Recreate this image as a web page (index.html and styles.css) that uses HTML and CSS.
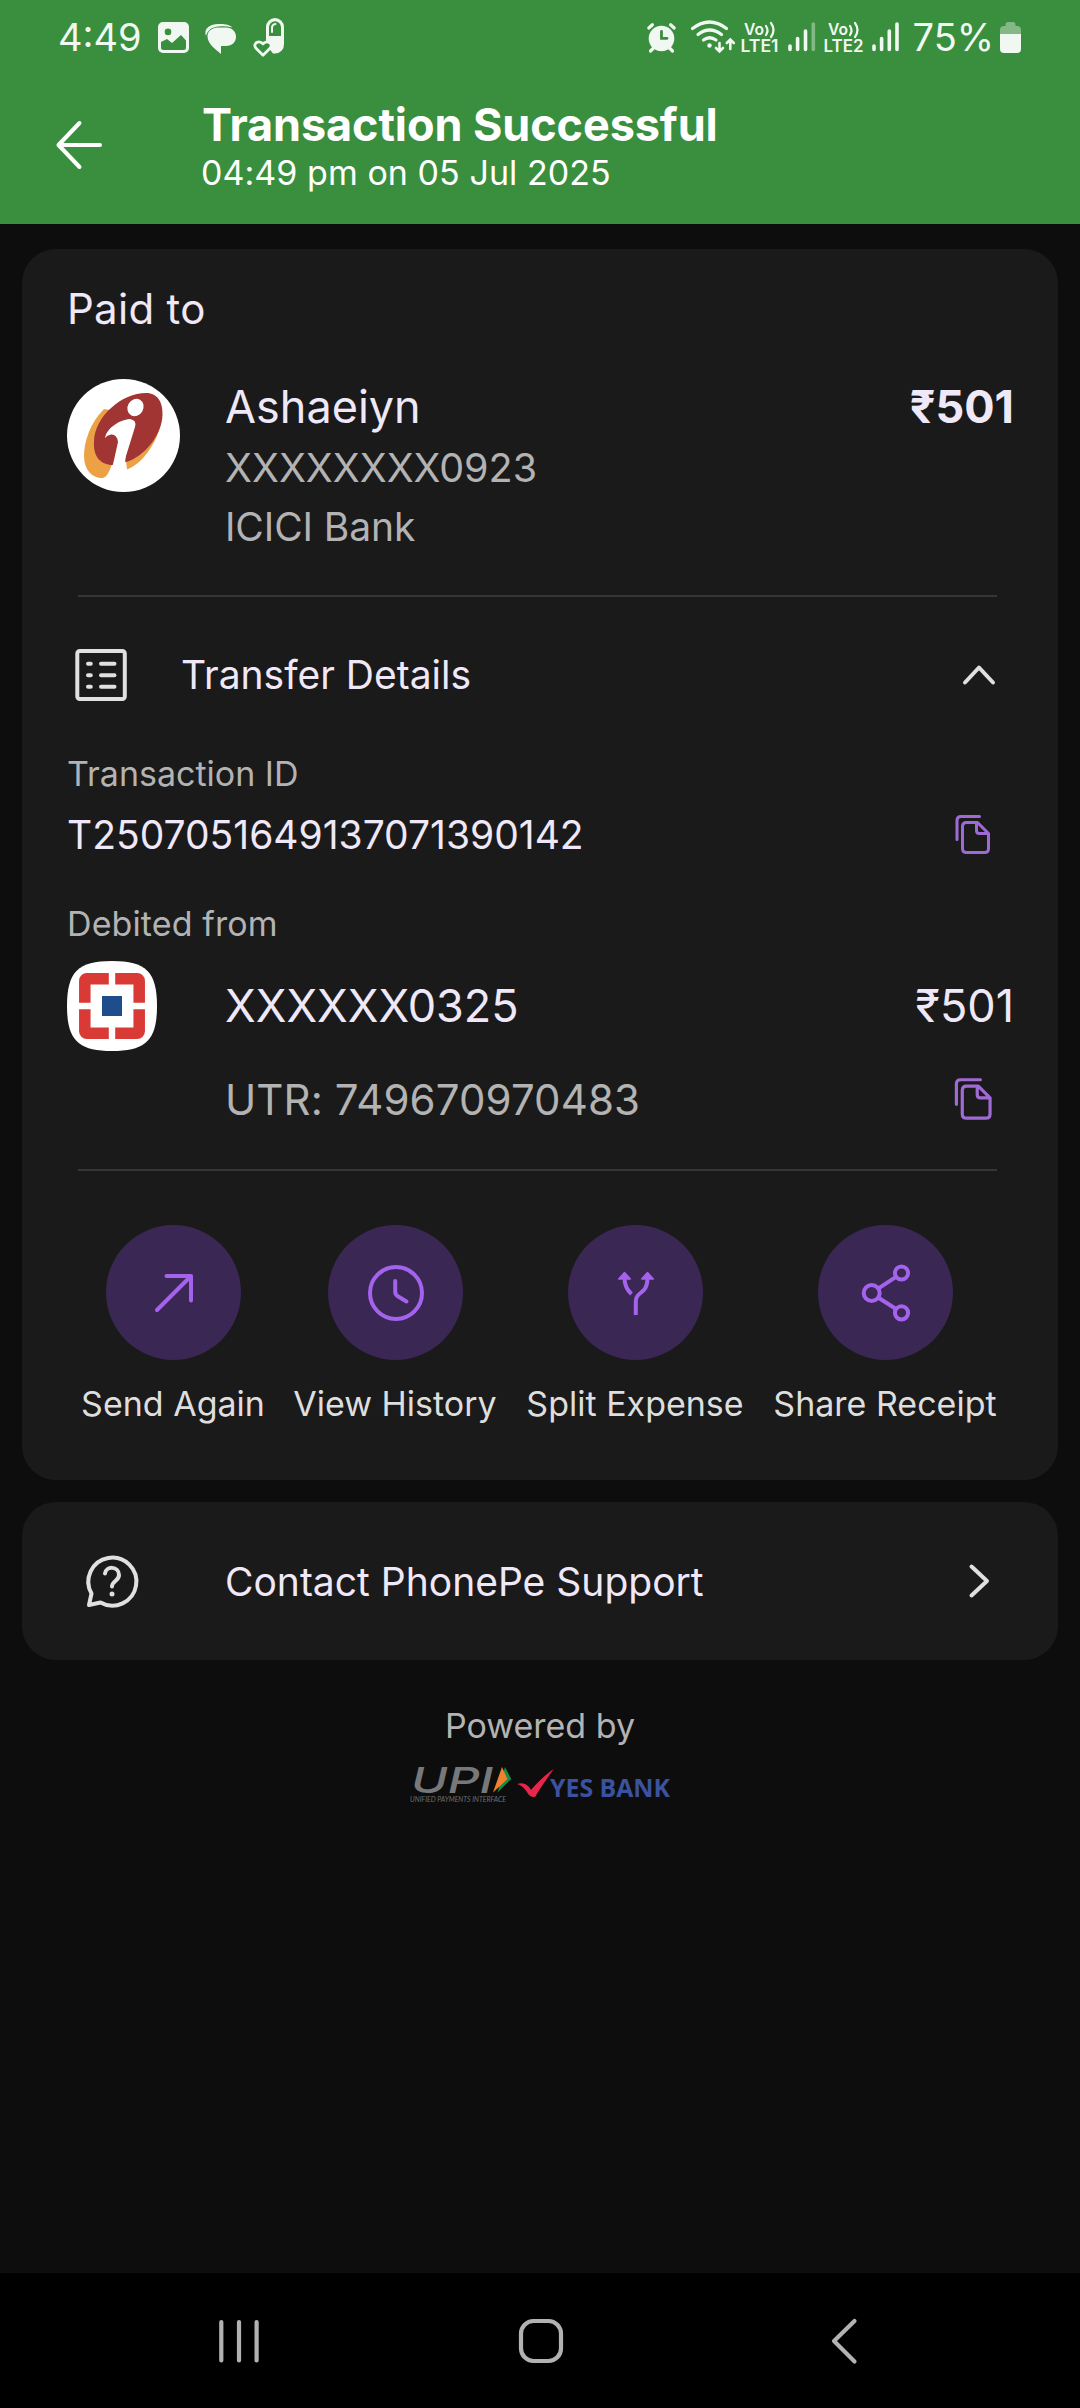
FILE: index.html
```html
<!DOCTYPE html>
<html lang="en">
<head>
<meta charset="utf-8">
<title>Transaction Successful</title>
<link rel="stylesheet" href="styles.css">
</head>
<body>
<div class="screen">
  <header class="header">
    <div class="status">
      <div class="status-side">
        <span class="status-text clock">4:49</span>
        <svg width="31" height="40" viewBox="158 17 31 40">
          <path fill="#f0f8f1" fill-rule="evenodd" d="M163 22h21a5 5 0 0 1 5 5v21a5 5 0 0 1-5 5h-21a5 5 0 0 1-5-5V27a5 5 0 0 1 5-5Zm5 6.600a3.300 3.300 0 1 0 0 6.600a3.300 3.300 0 0 0 0-6.600ZM161 42v5.500a2.500 2.500 0 0 0 2.500 2.500h20a2.500 2.500 0 0 0 2.500-2.500V40.500l-5-5.500l-9 8l-5-4Z"/>
        </svg>
        <svg width="32" height="40" viewBox="205 17 32 40">
          <path fill="#f0f8f1" d="M206 36c-3-8 5-12 12-12c6 0 10 0 14.500 3.500c-9-2-19-1.500-23 2.500c-2 2-3 4-3.500 6Z"/>
          <path fill="#f0f8f1" d="M218 27.500h8c6 0 10 4 10 9.200c0 5.300-4 9.300-10 9.300h-5V54c-5-4.500-13.500-10-13.500-17.500c0-5.500 4.500-9 10.500-9Z"/>
        </svg>
        <svg width="32" height="40" viewBox="252 17 32 40">
          <path fill="#f0f8f1" fill-rule="evenodd" d="M274 18a9 9 0 0 1 9 9v17a9 9 0 0 1-9 9.500h-2l-7-9V27a9 9 0 0 1 9-9Zm0 3.200a6 6 0 0 0-6 6V36h12v-8.800a6 6 0 0 0-6-6Z"/>
          <path fill="none" stroke="#f0f8f1" stroke-width="2" stroke-linecap="round" d="M271 32v-4q0-3.500 3.500-4"/>
          <path fill="#388e3c" stroke="#f0f8f1" stroke-width="2.800" stroke-linejoin="round" d="M262 55.300l-7-7c-4-5 3.500-8.800 7-4.300c3.500-4.500 11-.7 7 4.300Z"/>
        </svg>
      </div>
      <div class="status-side">
        <svg width="348" height="40" viewBox="646 17 348 40" class="signals">
          <g fill="none" stroke="#f0f8f1" stroke-width="3.200" stroke-linecap="round">
            <path d="M648.800 28l3.600-3.200M674.200 28l-3.600-3.200M650.500 51l4-4M672.500 51l-4-4"/>
            <circle cx="661.500" cy="38.500" r="12.800" fill="#f0f8f1" stroke="none"/>
            <path stroke="#388e3c" stroke-width="2.800" d="M661.500 31.500v6.800h5.500"/>
            <path stroke-width="3.200" d="M692.500 28.500q17-13 34 0M698 34.500q11.500-9 23.500 0M703.500 40q6-4.500 12.500 0"/>
            <path stroke-width="2.600" d="M719.500 43v8M716 48l3.500 3.500l3.500-3.500M730.300 49v-8.500M726.800 43l3.500-3.500l3.500 3.500"/>
          </g>
          <circle cx="709.500" cy="45.500" r="2.200" fill="#f0f8f1"/>
          <g fill="#f0f8f1" font-family="Inter, sans-serif" font-weight="600">
            <text x="744" y="35" font-size="16" textLength="20" lengthAdjust="spacingAndGlyphs">Vo</text>
            <text x="740.500" y="52" font-size="17" textLength="38" lengthAdjust="spacingAndGlyphs">LTE1</text>
            <text x="828" y="35" font-size="16" textLength="20" lengthAdjust="spacingAndGlyphs">Vo</text>
            <text x="823.500" y="52" font-size="17" textLength="40" lengthAdjust="spacingAndGlyphs">LTE2</text>
          </g>
          <path fill="none" stroke="#f0f8f1" stroke-width="2.200" stroke-linecap="round" d="M766 26q3 4.500 0 9M771 23q5 7 0 14M850 26q3 4.500 0 9M855 23q5 7 0 14"/>
          <g fill="none" stroke="#f0f8f1" stroke-width="3.600" stroke-linecap="round">
            <path d="M790 46v3.500M797.600 38.500v11M805.500 31v18.500M874 46v3.500M881.600 38.500v11M889.300 31v18.500M897 24v25.500"/>
            <path stroke-opacity=".4" d="M813.300 24v25.500"/>
          </g>
          <text x="912.500" y="51" font-size="38" font-family="Inter, sans-serif" fill="#f0f8f1">75%</text>
        </svg>
        <svg width="21" height="40" viewBox="1000 17 21 40">
          <path fill="#f0f8f1" fill-opacity=".4" d="M1000 34v-4q0-4 4-4h1.500v-1.500q0-2.500 2.500-2.500h5q2.500 0 2.500 2.500V26h1.500q4 0 4 4v4Z"/>
          <path fill="#f0f8f1" d="M1000 34h21v15q0 4-4 4h-13q-4 0-4-4Z"/>
        </svg>
      </div>
    </div>
    <div class="titlebar">
      <svg class="back" width="50" height="52" viewBox="54 119 50 52">
        <path fill="none" stroke="#fff" stroke-width="4" stroke-linecap="round" stroke-linejoin="round" d="M79.500 123L58.500 145l21 22M58.500 145H100"/>
      </svg>
      <div>
        <h1 class="title">Transaction Successful</h1>
        <p class="subtitle">04:49 pm on 05 Jul 2025</p>
      </div>
    </div>
  </header>

  <main class="content">
    <section class="card receipt">
      <h2 class="paid-to">Paid to</h2>
      <div class="payee">
        <svg width="113" height="113" viewBox="67 379 113 113">
          <circle cx="123.500" cy="435.500" r="56.500" fill="#fff"/>
          <path fill="#eda145" d="M104 409C90 423 84 442 84 456C84 470 92 478 102 478C107 478 110 470 112 464L126 461L127 469.500C142 464 158 443 162.300 418Z"/>
          <path fill="#a03533" d="M146 393C158 393 163 403 162.500 415C161.500 436 144 457 126 462L113 465C100 465 93 456 94 441C95 416 122 393 146 393Z"/>
          <ellipse cx="135.500" cy="407.500" rx="7.800" ry="9" transform="rotate(30 135.500 407.500)" fill="#fff"/>
          <path fill="#fff" d="M105 438C107 428 119 420 130 419Q137 420 135 427L126 456Q124 464 127 470L120 480H106Q112 470 114 460L118 442Q117 434 111 434.500Q107 435 105 438Z"/>
        </svg>
        <div class="payee-info">
          <div class="payee-name">Ashaeiyn</div>
          <div class="payee-account">XXXXXXXX0923</div>
          <div class="payee-bank">ICICI Bank</div>
        </div>
        <div class="amount bold">₹501</div>
      </div>
      <div class="divider"></div>

      <div class="details-head">
        <svg width="52" height="54" viewBox="75 647 52 54">
          <g fill="none" stroke="#e0dfe1" stroke-width="4" stroke-linecap="round">
            <rect x="77.300" y="650" width="47.500" height="48" rx="2.500"/>
            <path d="M88 662.700h2.800M101 662.700h13.500M88 674.300h2.800M101 674.300h13.500M88 685.700h2.800M101 685.700h13.500"/>
          </g>
        </svg>
        <span class="details-title">Transfer Details</span>
        <svg width="36" height="24" viewBox="961 662 36 24">
          <path fill="none" stroke="#e0dfe1" stroke-width="4" stroke-linecap="round" stroke-linejoin="round" d="M965 681.500l14-15l14 15"/>
        </svg>
      </div>

      <div class="label txn-label">Transaction ID</div>
      <div class="txn-row">
        <span class="txn-id">T2507051649137071390142</span>
        <svg class="copy-small" width="40" height="44" viewBox="953 813 40 44">
          <g fill="none" stroke="#a06ad6" stroke-width="3" stroke-linejoin="round">
            <path stroke-linecap="round" d="M979.500 816.500H961q-4 0-4 4V839.500"/>
            <path d="M977.500 822.500H966.500q-4 0-4 4V848.500q0 4 4 4H984.500q4 0 4-4V833.500ZM976.500 822.500V830.500q0 3 3 3H988.500"/>
          </g>
        </svg>
      </div>

      <div class="label debit-label">Debited from</div>
      <div class="debit-row">
        <svg width="90" height="90" viewBox="67 961 90 90">
          <path fill="#fff" d="M112 961C146 961 157 972 157 1006S146 1051 112 1051S67 1040 67 1006S78 961 112 961Z"/>
          <rect x="84.800" y="978.800" width="54.400" height="54.400" rx="2" fill="none" stroke="#d93a35" stroke-width="11.500" stroke-linejoin="round"/>
          <path stroke="#fff" stroke-width="6.400" d="M112 970v20M112 1022v20M76 1006h20M128 1006h20"/>
          <rect x="102" y="996" width="20" height="20" fill="#1e4d8b"/>
        </svg>
        <span class="debit-account">XXXXXX0325</span>
        <span class="amount">₹501</span>
      </div>
      <div class="utr-row">
        <span class="utr">UTR: 749670970483</span>
        <svg class="copy-large" width="43" height="47" viewBox="953 813 40 44">
          <g fill="none" stroke="#a06ad6" stroke-width="3" stroke-linejoin="round">
            <path stroke-linecap="round" d="M979.500 816.500H961q-4 0-4 4V839.500"/>
            <path d="M977.500 822.500H966.500q-4 0-4 4V848.500q0 4 4 4H984.500q4 0 4-4V833.500ZM976.500 822.500V830.500q0 3 3 3H988.500"/>
          </g>
        </svg>
      </div>
      <div class="divider"></div>

      <nav class="actions">
        <div class="action">
          <div class="action-icon">
            <svg width="135" height="135" viewBox="106 1225 135 135" fill="none" stroke="#a463ec" stroke-width="4" stroke-linecap="round" stroke-linejoin="round">
              <path d="M166.500 1276H191V1300.500M157 1310L190 1277"/>
            </svg>
          </div>
          <span>Send Again</span>
        </div>
        <div class="action">
          <div class="action-icon">
            <svg width="135" height="135" viewBox="328 1225 135 135" fill="none" stroke="#a463ec" stroke-width="4" stroke-linecap="round" stroke-linejoin="round">
              <circle cx="396" cy="1293" r="26"/>
              <path d="M395.200 1281V1291.500q0 3.500 3 5l8.300 5"/>
            </svg>
          </div>
          <span>View History</span>
        </div>
        <div class="action">
          <div class="action-icon">
            <svg width="135" height="135" viewBox="568 1225 135 135" fill="none" stroke="#a463ec" stroke-width="4" stroke-linejoin="round">
              <path d="M635.800 1315V1301C635.800 1291 647.500 1295 647.500 1278M624.500 1278C624.500 1286 627 1290 631.500 1294"/>
              <path fill="#a463ec" stroke-width="1.500" d="M624.500 1272.500l5.800 6.500h-11.600ZM647.500 1272.500l5.800 6.500h-11.600Z"/>
            </svg>
          </div>
          <span>Split Expense</span>
        </div>
        <div class="action">
          <div class="action-icon">
            <svg width="135" height="135" viewBox="818 1225 135 135" fill="none" stroke="#a463ec" stroke-width="4">
              <circle cx="871.700" cy="1293" r="8"/>
              <circle cx="901.500" cy="1273" r="6.600"/>
              <circle cx="901.500" cy="1312.800" r="6.600"/>
              <path d="M878.500 1288.300L896 1276.800M878.500 1297.700L896 1309"/>
            </svg>
          </div>
          <span>Share Receipt</span>
        </div>
      </nav>
    </section>

    <section class="card support">
      <svg width="54" height="54" viewBox="85 1554 54 54">
        <g fill="none" stroke="#e0dfe1" stroke-width="4" stroke-linecap="round" stroke-linejoin="round">
          <path d="M89 1605L91.500 1593.500A24 24 0 1 1 100.500 1602.500Z"/>
          <path d="M105 1573.500C106 1565.500 119 1566 119 1575C119 1581 112 1581 112 1586.500"/>
        </g>
        <circle cx="112" cy="1594" r="2.500" fill="#e0dfe1"/>
      </svg>
      <span class="support-text">Contact PhonePe Support</span>
      <svg width="24" height="36" viewBox="967 1563 24 36">
        <path fill="none" stroke="#e0dfe1" stroke-width="4" stroke-linecap="round" stroke-linejoin="round" d="M971.500 1566.500L987 1581l-15.500 14.500"/>
      </svg>
    </section>

    <footer class="powered">
      <span>Powered by</span>
      <svg class="logos" width="264" height="42" viewBox="409 1764 264 42">
        <text x="412" y="1793" font-family="Inter, sans-serif" font-style="italic" font-weight="500" font-size="36" fill="#77787a" textLength="82" lengthAdjust="spacingAndGlyphs">UPI</text>
        <text x="411" y="1802" font-family="Lato, sans-serif" font-style="italic" font-size="6.800" fill="#6c6d6f" textLength="96" lengthAdjust="spacingAndGlyphs">UNIFIED PAYMENTS INTERFACE</text>
        <path fill="#1c8a43" d="M506 1767L512.300 1779L498.500 1792.500Z"/>
        <path fill="#f0812e" d="M503 1767L508.500 1779L494 1792.500Z"/>
        <path fill="#e8264c" d="M518 1784C524 1782 529 1784 532 1790C538 1783 546 1775 554.700 1769C548 1779 541 1788 536.500 1796.500Q533 1798 530 1795C526 1789 524 1786 518 1784Z"/>
        <text x="551" y="1796.700" font-family="'Open Sans', sans-serif" font-weight="700" font-size="24.700" fill="#3b529f" textLength="120" lengthAdjust="spacingAndGlyphs">YES BANK</text>
      </svg>
    </footer>
  </main>

  <nav class="navbar">
    <svg width="46" height="50" viewBox="216 2316 46 50">
      <path fill="none" stroke="#b2b2b2" stroke-width="4.200" stroke-linecap="round" d="M221.300 2322v38.500M239 2322v38.500M256.600 2322v38.500"/>
    </svg>
    <svg width="48" height="50" viewBox="517 2316 48 50">
      <rect x="521" y="2321" width="40" height="40" rx="12.500" fill="none" stroke="#b2b2b2" stroke-width="4.200"/>
    </svg>
    <svg width="30" height="50" viewBox="829 2316 30 50">
      <path fill="none" stroke="#b2b2b2" stroke-width="4.200" stroke-linecap="round" stroke-linejoin="round" d="M854.500 2321L834 2341l20.500 20.500"/>
    </svg>
  </nav>
</div>
</body>
</html>
```
FILE: styles.css
```css
* { box-sizing: border-box; }

body {
  margin: 0;
  background: #0d0d0d;
  font-family: Inter, "Liberation Sans", sans-serif;
  color: #efe8f8;
}

h1, h2, p { margin: 0; font-weight: 400; }

svg { display: block; flex: none; overflow: visible; }

.screen {
  width: 1080px;
  height: 2408px;
  display: flex;
  flex-direction: column;
  white-space: nowrap;
}

/* Status bar and title */
.header { height: 224px; background: #398f3d; color: #fff; }

.status {
  height: 74px;
  padding: 0 59px 0 58px;
  display: flex;
  justify-content: space-between;
  align-items: center;
}
.status-side { display: flex; align-items: center; gap: 16px; }
.status-text { font-size: 38px; line-height: 40px; color: #f0f8f1; }
.clock { width: 84px; }
.signals { margin-right: -10px; }

.titlebar { display: flex; gap: 97px; padding: 23px 0 0 54px; }
.back { margin-top: 22px; }
.title { font-size: 45px; font-weight: 700; line-height: 55px; letter-spacing: -0.1px; padding-left: 1px; }
.subtitle { font-size: 34px; line-height: 41px; letter-spacing: 0.05px; }

/* Cards */
.content { flex: 1; padding: 25px 22px 0; }
.card { background: #1a1a1a; border-radius: 34px; }

.receipt { height: 1231px; padding: 35px 44px 0 45px; }
.paid-to { font-size: 42px; line-height: 50px; letter-spacing: 0.3px; }

.payee { display: flex; margin-top: 45px; align-items: flex-start; }
.payee-info { flex: 1; margin-left: 45px; color: #b3b3b3; }
.payee-name { font-size: 45px; line-height: 55px; color: #efe8f8; }
.payee-account { margin-top: 5px; font-size: 39.5px; line-height: 59px; }
.payee-bank { font-size: 39px; line-height: 58px; letter-spacing: -0.1px; }

.amount { font-size: 45px; line-height: 55px; }
.bold { font-weight: 700; }

.divider { height: 2px; margin: 39px 17px 0 11px; background: #363636; }

.details-head { height: 55px; margin: 50px 17px 0 8px; display: flex; align-items: center; }
.details-title { flex: 1; margin-left: 54px; font-size: 39px; line-height: 55px; }

.label { font-size: 34px; line-height: 40px; color: #b3b3b3; }
.txn-label { margin-top: 52px; }
.txn-row { display: flex; justify-content: space-between; align-items: center; height: 51px; margin-top: 15px; }
.txn-id { font-size: 39px; }
.copy-small { margin-right: 21px; }

.debit-label { margin-top: 44px; letter-spacing: 0.1px; }
.debit-row { display: flex; align-items: center; height: 90px; margin-top: 17px; }
.debit-account { flex: 1; margin-left: 68px; font-size: 45px; line-height: 55px; }
.debit-account, .debit-row .amount { padding-bottom: 1px; }

.utr-row {
  display: flex;
  justify-content: space-between;
  align-items: center;
  height: 50px;
  margin: 23px 0 45px;
  padding: 0 19px 0 158px;
}
.utr { font-size: 42px; color: #b3b3b3; letter-spacing: 0.1px; }
.utr-row + .divider { margin-top: 0; }

/* Quick actions */
.actions {
  display: grid;
  grid-template-columns: 212px 232px 248px 252px;
  margin-top: 54px;
}
.action {
  display: flex;
  flex-direction: column;
  align-items: center;
  gap: 24px;
  font-size: 34px;
  line-height: 40px;
  color: #dedede;
}
.action-icon { border-radius: 50%; background: #3a2753; }

/* Support */
.support {
  height: 158px;
  margin-top: 22px;
  padding: 0 67px 0 63px;
  display: flex;
  align-items: center;
}
.support-text { flex: 1; margin-left: 86px; font-size: 39px; }

.powered {
  display: flex;
  flex-direction: column;
  align-items: center;
  gap: 18px;
  margin-top: 46px;
  font-size: 34px;
  line-height: 40px;
  color: #b3b3b3;
}

/* System navigation */
.navbar {
  height: 135px;
  background: #000;
  display: grid;
  grid-template-columns: 301px 312px 30px;
  align-items: center;
  padding-left: 216px;
}
```
